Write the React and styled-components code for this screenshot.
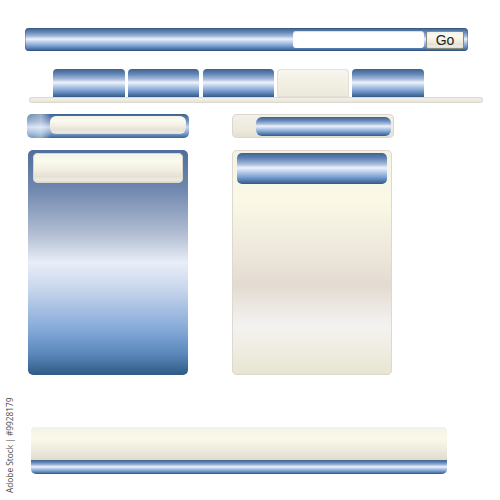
import styled, { createGlobalStyle, css } from 'styled-components';

const GlobalStyle = createGlobalStyle`
  html, body {
    margin: 0;
    padding: 0;
    background: #ffffff;
    font-family: "Liberation Sans", Arial, sans-serif;
  }
`;

const blueGloss = css`
  background: linear-gradient(
    to bottom,
    #3c618f 0%,
    #6586b6 18%,
    #a5bbdb 36%,
    #eef2fa 48%,
    #c6d6ee 58%,
    #81a5d3 76%,
    #5079ab 90%,
    #335884 100%
  );
`;

const creamGloss = css`
  background: linear-gradient(
    to bottom,
    #f4f3ea 0%,
    #fbfaee 28%,
    #f2efe2 55%,
    #e6e0d3 78%,
    #ecebe4 90%,
    #dedbcc 100%
  );
`;

const Page = styled.div`
  position: relative;
  width: 500px;
  height: 500px;
  padding-top: 28px;
  box-sizing: border-box;
  overflow: hidden;
`;

const SearchBar = styled.div`
  ${blueGloss}
  margin-left: 25px;
  width: 443px;
  height: 23px;
  box-sizing: border-box;
  border-radius: 4px;
  display: flex;
  align-items: center;
  justify-content: flex-end;
  gap: 2px;
  padding: 0 4px 0 0;
  box-shadow: inset 0 0 0 1px rgba(40, 70, 110, 0.35);
`;

const SearchInput = styled.div`
  width: 131px;
  height: 17px;
  background: #ffffff;
  border-radius: 3px;
  box-shadow: inset 0 1px 1px rgba(0, 0, 0, 0.15);
`;

const GoButton = styled.button`
  ${creamGloss}
  width: 38px;
  height: 18px;
  padding: 0;
  border: 1px solid #8b8a82;
  border-radius: 2px;
  font-family: "Liberation Sans", Arial, sans-serif;
  font-size: 14px;
  line-height: 16px;
  color: #222222;
`;

const Nav = styled.nav`
  margin: 18px 0 0 29px;
  width: 454px;
`;

const TabRow = styled.div`
  display: flex;
  gap: 3.25px;
  padding-left: 24px;
`;

const Tab = styled.div`
  width: 71.5px;
  height: 28px;
  border-radius: 4px 4px 0 0;
  ${(p) =>
    p.$active
      ? css`
          background: linear-gradient(#f7f6f0 0%, #f3f1e6 40%, #ece8da 100%);
          box-shadow: inset 0 0 0 1px #e2e0d8;
        `
      : blueGloss}
`;

const Rail = styled.div`
  height: 6px;
  border-radius: 3px;
  background: linear-gradient(#f5f4ec, #e6e3d4);
  box-shadow: inset 0 0 0 1px #dcdad0;
`;

const Columns = styled.div`
  display: grid;
  grid-template-columns: 162px 162px;
  column-gap: 43px;
  margin: 11px 0 0 27px;
`;

const Column = styled.div`
  display: flex;
  flex-direction: column;
  gap: 12px;
`;

const Header = styled.div`
  height: 24px;
  border-radius: 5px;
  box-sizing: border-box;
  display: flex;
  align-items: flex-start;
  justify-content: flex-end;
  padding: ${(p) => (p.$tone === 'blue' ? '2px 3px 0 0' : '3px 3px 0 0')};
  ${(p) =>
    p.$tone === 'blue'
      ? css`
          background: linear-gradient(
            to right,
            rgba(255, 255, 255, 0.25) 0px,
            rgba(255, 255, 255, 0.45) 14px,
            rgba(255, 255, 255, 0) 24px
          ),
          linear-gradient(#3c618f 0%, #7394c2 30%, #c9d6ec 55%, #7ea2d0 80%, #3b628f 100%);
        `
      : css`
          background: linear-gradient(#f3f2ea, #ece9db 70%, #e2dfcf);
          box-shadow: inset 0 0 0 1px #dad8cc;
        `}
`;

const Pill = styled.div`
  width: ${(p) => p.$w}px;
  height: ${(p) => p.$h}px;
  border-radius: 6px;
  ${(p) => (p.$tone === 'blue' ? blueGloss : creamGloss)}
`;

const Panel = styled.div`
  width: 160px;
  height: 225px;
  margin-left: ${(p) => (p.$tone === 'blue' ? 1 : 0)}px;
  border-radius: 5px;
  box-sizing: border-box;
  padding: 3px 5px 0 5px;
  ${(p) =>
    p.$tone === 'blue'
      ? css`
          background: linear-gradient(
            to bottom,
            #4f6e9b 0%,
            #7289b0 18%,
            #b4c0d4 38%,
            #e9eef7 50%,
            #c7d5ec 62%,
            #83a9d8 80%,
            #5582b5 92%,
            #2f5a84 100%
          );
        `
      : css`
          background: linear-gradient(
            to bottom,
            #f3f1e3 0%,
            #fbf9e6 22%,
            #eee8dc 45%,
            #e3dbd1 60%,
            #f3f2f1 78%,
            #eeecdf 90%,
            #e7e4d1 100%
          );
          box-shadow: inset 0 0 0 1px #dcdad0;
        `}
`;

const PanelBar = styled.div`
  height: ${(p) => (p.$tone === 'blue' ? 31 : 30)}px;
  border-radius: 5px;
  ${(p) =>
    p.$tone === 'blue'
      ? blueGloss
      : css`
          ${creamGloss}
          box-shadow: inset 0 0 0 1px #d9d6c8;
        `}
`;

const Footer = styled.div`
  margin: 52px 0 0 31px;
  width: 416px;
  border-radius: 5px;
  overflow: hidden;
  box-shadow: inset 0 0 0 1px #d9d7cc;
`;

const FooterBody = styled.div`
  height: 33px;
  background: linear-gradient(#f3f2ea 0%, #fbf9e8 35%, #ece9dc 75%, #dfdccd 100%);
`;

const FooterStrip = styled.div`
  height: 14px;
  ${blueGloss}
`;

const StockId = styled.div`
  position: absolute;
  left: 4px;
  top: 493px;
  transform: rotate(-90deg);
  transform-origin: left top;
  font-family: "Open Sans", "Liberation Sans", sans-serif;
  font-size: 8.3px;
  line-height: 12px;
  color: #4a4a4a;
  white-space: nowrap;
`;

const tabs = [false, false, false, true, false];

export default function App() {
  return (
    <Page>
      <GlobalStyle />
      <SearchBar>
        <SearchInput />
        <GoButton>Go</GoButton>
      </SearchBar>

      <Nav>
        <TabRow>
          {tabs.map((active, i) => (
            <Tab key={i} $active={active} />
          ))}
        </TabRow>
        <Rail />
      </Nav>

      <Columns>
        <Column>
          <Header $tone="blue">
            <Pill $tone="cream" $w={136} $h={18} />
          </Header>
          <Panel $tone="blue">
            <PanelBar $tone="cream" />
          </Panel>
        </Column>
        <Column>
          <Header $tone="cream">
            <Pill $tone="blue" $w={135} $h={19} />
          </Header>
          <Panel $tone="cream">
            <PanelBar $tone="blue" />
          </Panel>
        </Column>
      </Columns>

      <Footer>
        <FooterBody />
        <FooterStrip />
      </Footer>

      <StockId>Adobe Stock | #9928179</StockId>
    </Page>
  );
}
